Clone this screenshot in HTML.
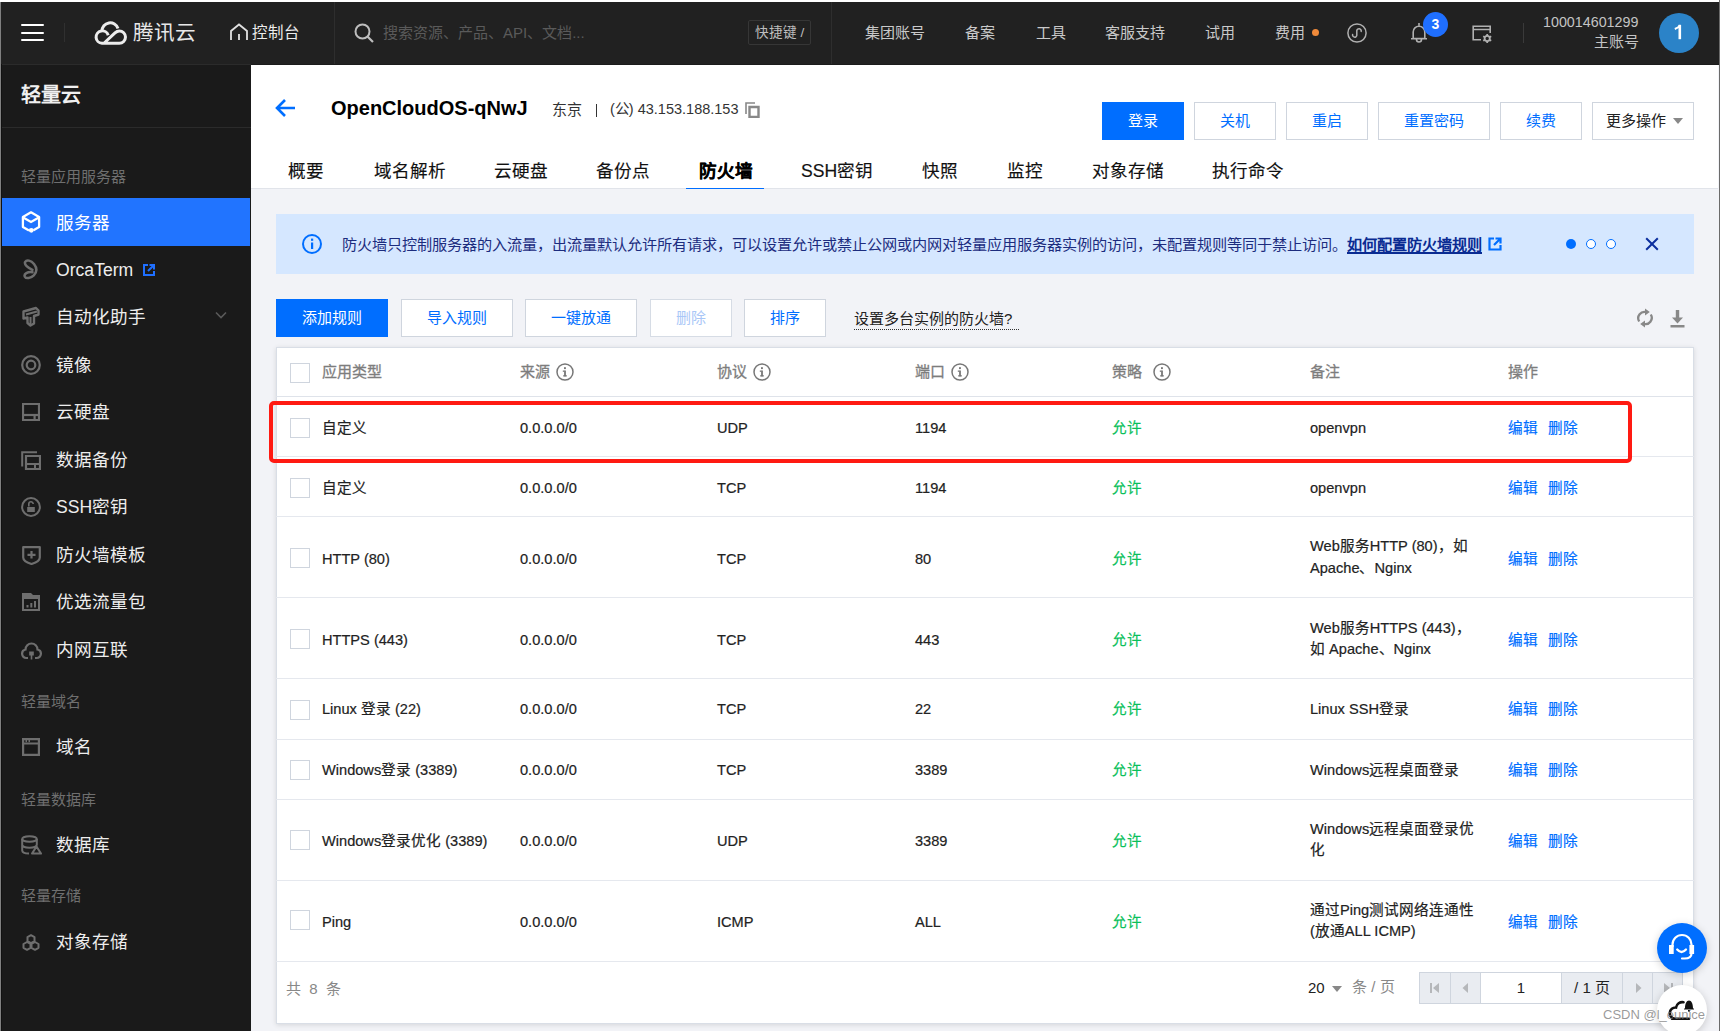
<!DOCTYPE html>
<html lang="zh-CN"><head><meta charset="utf-8">
<style>
*{box-sizing:border-box;margin:0;padding:0}
html,body{width:1720px;height:1031px;overflow:hidden;background:#fff;font-family:"Liberation Sans",sans-serif;}
.a{position:absolute;white-space:nowrap}
#edgeL{position:absolute;left:0;top:2px;width:1px;height:1029px;background:#808080}
#edgeL2{position:absolute;left:1px;top:64px;width:1px;height:967px;background:#111}
#edgeR{position:absolute;left:1719px;top:0;width:1px;height:1031px;background:#6b6b6b}
#hdr{position:absolute;left:1px;top:2px;width:1718px;height:62px;background:#212121}
#side{position:absolute;left:2px;top:64px;width:249px;height:967px;background:#1a1a1a;border-top:1px solid #2b2b2b}
#main{position:absolute;left:251px;top:65px;width:1468px;height:966px;background:#f2f3f7}
#mhead{position:absolute;left:251px;top:65px;width:1467px;height:124px;background:#fff;border-bottom:1px solid #e1e4ea}
.hn{color:#c9c9c9;font-size:15px;line-height:20px;top:23px}
.si{color:#ededed;font-size:17.6px;line-height:24px;left:56px}
.sl{color:#6f6f6f;font-size:15px;line-height:20px;left:21px}
.ic{position:absolute;left:21px}
.tab{color:#111;font-size:17.6px;line-height:24px;top:158.8px;-webkit-text-stroke:0.15px currentColor}
.cb{position:absolute;left:290px;width:20px;height:20px;border:1px solid #cfd5de;background:#fff}
.th{font-size:15px;line-height:20px;top:362px;color:#7d7d7d;-webkit-text-stroke:0.3px currentColor}
.td{font-size:14.6px;line-height:22px;color:#222;-webkit-text-stroke:0.2px currentColor}
.btn{position:absolute;height:38px;border:1px solid #cfd5de;background:#fff;color:#006eff;font-size:15px;line-height:36px;text-align:center}
</style></head><body>
<div id="hdr"></div>
<div id="side"></div>
<div id="main"></div>
<div id="mhead"></div>
<div class="a" style="left:251px;top:64px;width:1468px;height:1px;background:#1b1b1b"></div>
<div id="edgeL"></div><div id="edgeL2"></div><div id="edgeR"></div>

<!-- HEADER -->
<div class="a" style="left:21px;top:24px;width:23px;height:2px;background:#fff;border-radius:1px"></div>
<div class="a" style="left:21px;top:32px;width:23px;height:2px;background:#fff;border-radius:1px"></div>
<div class="a" style="left:21px;top:39px;width:23px;height:2px;background:#fff;border-radius:1px"></div>
<div class="a" style="left:64px;top:23px;width:1px;height:19px;background:#303030"></div>
<svg class="a" style="left:90px;top:15px" width="45" height="35" viewBox="0 0 45 35"><path d="M18.2 20.2 A6.2 6.2 0 1 0 12 28.3 H29.3 A6.2 6.2 0 0 0 29.3 15.9 C27.6 15.9 26.3 16.6 25 17.8 L14.2 28" fill="none" stroke="#ececec" stroke-width="3" stroke-linejoin="round"/><path d="M12 16.2 A8.2 8.2 0 0 1 28 13.5" fill="none" stroke="#ececec" stroke-width="3"/></svg>
<div class="a" style="left:133px;top:19px;font-size:20.6px;line-height:28px;color:#e8e8e8">腾讯云</div>
<svg class="a" style="left:229px;top:23px" width="20" height="18" viewBox="0 0 20 18"><path d="M2 17 V8 L10 1.5 L18 8 V17 M10 11 V17" fill="none" stroke="#e0e0e0" stroke-width="1.8"/></svg>
<div class="a" style="left:252px;top:22px;font-size:15.5px;line-height:21px;color:#ececec">控制台</div>
<div class="a" style="left:334px;top:2px;width:1px;height:62px;background:#2e2e2e"></div>
<svg class="a" style="left:354px;top:23px" width="21" height="20" viewBox="0 0 21 20"><circle cx="8.5" cy="8.5" r="7" fill="none" stroke="#bdbdbd" stroke-width="2"/><path d="M13.5 13.5 L19 19" stroke="#bdbdbd" stroke-width="2.2"/></svg>
<div class="a" style="left:383px;top:22px;font-size:15px;line-height:21px;color:#5a5a5a">搜索资源、产品、API、文档...</div>
<div class="a" style="left:748px;top:20px;width:63px;height:25px;border:1px solid #363636;border-radius:2px;color:#bdbdbd;font-size:13.6px;line-height:23px;text-align:center">快捷键 /</div>
<div class="a" style="left:831px;top:2px;width:1px;height:62px;background:#2e2e2e"></div>
<div class="a hn" style="left:865px">集团账号</div>
<div class="a hn" style="left:965px">备案</div>
<div class="a hn" style="left:1036px">工具</div>
<div class="a hn" style="left:1105px">客服支持</div>
<div class="a hn" style="left:1205px">试用</div>
<div class="a hn" style="left:1275px">费用</div>
<div class="a" style="left:1312px;top:29px;width:7px;height:7px;border-radius:50%;background:#f08a3a"></div>
<svg class="a" style="left:1347px;top:23px" width="20" height="20" viewBox="0 0 20 20"><circle cx="10" cy="10" r="9.1" fill="none" stroke="#b0b0b0" stroke-width="1.5"/><path d="M5.6 11.6 A2.1 2.1 0 1 0 9.8 12.4 V7.6 A2.1 2.1 0 1 1 14.2 8.4" fill="none" stroke="#b0b0b0" stroke-width="1.5" stroke-linecap="round"/></svg>
<svg class="a" style="left:1410px;top:22px" width="18" height="21" viewBox="0 0 18 21"><path d="M3.2 16.5 V10 a5.8 5.8 0 0 1 11.6 0 V16.5 Z M1 16.8 H17 M9 1 V3.5 M6.5 17.5 a2.5 2.5 0 0 0 5 0" fill="none" stroke="#b0b0b0" stroke-width="1.6" stroke-linejoin="round"/></svg>
<div class="a" style="left:1423px;top:12px;width:25px;height:25px;border-radius:50%;background:#1f6fff;color:#fff;font-size:14px;font-weight:bold;line-height:25px;text-align:center">3</div>
<svg class="a" style="left:1472px;top:25px" width="21" height="19" viewBox="0 0 21 19"><path d="M9 14.8 H1.2 V1.2 H18.2 V8 M1.2 4.5 H18.2" fill="none" stroke="#b0b0b0" stroke-width="1.6"/><g transform="translate(15.2 13.5)"><circle r="2.6" fill="none" stroke="#b0b0b0" stroke-width="1.8"/><path d="M0 -4.6 V-2.6 M0 4.6 V2.6 M-4 -2.3 L-2.25 -1.3 M4 2.3 L2.25 1.3 M-4 2.3 L-2.25 1.3 M4 -2.3 L2.25 -1.3" stroke="#b0b0b0" stroke-width="1.8"/></g></svg>
<div class="a" style="left:1523px;top:23px;width:1px;height:20px;background:#3a3a3a"></div>
<div class="a" style="left:1543px;top:13px;font-size:14.3px;line-height:18px;color:#c4c4c4">100014601299</div>
<div class="a" style="left:1594px;top:32px;font-size:15px;line-height:20px;color:#c4c4c4">主账号</div>
<div class="a" style="left:1659px;top:13px;width:40px;height:40px;border-radius:50%;background:#2b83c8"></div><svg class="a" style="left:1674px;top:24px" width="9" height="16" viewBox="0 0 9 16"><path d="M5.8 0.8 V15.2" stroke="#fff" stroke-width="2.6"/><path d="M6 1.2 C5 3 3 4.3 0.8 5" fill="none" stroke="#fff" stroke-width="2"/></svg>

<!-- SIDEBAR -->
<div class="a" style="left:21px;top:82px;font-size:20px;line-height:26px;color:#f0f0f0;font-weight:bold">轻量云</div>
<div class="a" style="left:2px;top:127px;width:249px;height:1px;background:#2b2b2b"></div>
<div class="a sl" style="top:167px">轻量应用服务器</div>
<div class="a" style="left:2px;top:198px;width:248px;height:48px;background:#2174ff"></div>
<div class="a si" style="top:211px;color:#fff">服务器</div>
<div class="a si" style="top:258px">OrcaTerm</div>
<div class="a si" style="top:305px">自动化助手</div>
<div class="a si" style="top:353px">镜像</div>
<div class="a si" style="top:400px">云硬盘</div>
<div class="a si" style="top:448px">数据备份</div>
<div class="a si" style="top:495px">SSH密钥</div>
<div class="a si" style="top:543px">防火墙模板</div>
<div class="a si" style="top:590px">优选流量包</div>
<div class="a si" style="top:638px">内网互联</div>
<div class="a sl" style="top:691.5px">轻量域名</div>
<div class="a si" style="top:735px">域名</div>
<div class="a sl" style="top:789.5px">轻量数据库</div>
<div class="a si" style="top:833px">数据库</div>
<div class="a sl" style="top:886px">轻量存储</div>
<div class="a si" style="top:930px">对象存储</div>

<svg class="ic" style="top:211px;left:21px" width="20" height="22" viewBox="0 0 20 22"><path d="M8 19.6 L1.9 16.1 V6 L10 1.3 L18.1 6 V16.1 L12.5 19.3" fill="none" stroke="#fff" stroke-width="2.3" stroke-linejoin="round"/><path d="M2.6 6.8 L10 11 L17.4 6.8" fill="none" stroke="#fff" stroke-width="2.3"/><circle cx="10.3" cy="19.3" r="2.4" fill="#fff"/></svg>
<svg class="ic" style="top:259px;left:22px" width="18" height="22" viewBox="0 0 18 22"><path d="M10.5 10.8 C6 9 1.8 5.5 3.2 2.8 C4.6 0.6 9 1.2 12 5 C15.2 9 15.2 12.8 11.8 16.3 C8.8 19.2 4.2 20.2 2.8 17.6 C1.6 15 5.5 12.5 10.5 13.2" fill="none" stroke="#6e6e6e" stroke-width="2.5" stroke-linecap="round"/></svg>
<svg class="ic" style="top:306px;left:22px" width="18" height="21" viewBox="0 0 18 21"><path d="M1.5 5.5 L14 2 L16.5 4.5 V8.5 L12 10 V17.5 L8.5 19.5 L5.5 17 V11.5 L1.5 12.5 Z" fill="none" stroke="#6e6e6e" stroke-width="2.4" stroke-linejoin="round"/><path d="M4 8.5 L15 5.5 M8.5 11 V18" stroke="#6e6e6e" stroke-width="2"/></svg>
<svg class="ic" style="top:355px" width="20" height="20" viewBox="0 0 20 20"><circle cx="10" cy="10" r="8.8" fill="none" stroke="#6e6e6e" stroke-width="2.2"/><circle cx="10" cy="10" r="4.3" fill="none" stroke="#6e6e6e" stroke-width="2.2"/></svg>
<svg class="ic" style="top:403px;left:22px" width="18" height="18" viewBox="0 0 18 18"><path d="M1 1 H17 V17 H1 Z" fill="none" stroke="#6e6e6e" stroke-width="2.2"/><path d="M1 12 H17" stroke="#6e6e6e" stroke-width="2.2"/><rect x="11.5" y="12" width="2.2" height="4" fill="#6e6e6e"/></svg>
<svg class="ic" style="top:451px" width="20" height="19" viewBox="0 0 20 19"><path d="M1.2 15.5 V1.2 H16" fill="none" stroke="#6e6e6e" stroke-width="2"/><path d="M5 5 H19 V18 H5 Z M5 13 H19" fill="none" stroke="#6e6e6e" stroke-width="2.2"/><rect x="13" y="13" width="2" height="4" fill="#6e6e6e"/></svg>
<svg class="ic" style="top:497px" width="20" height="20" viewBox="0 0 20 20"><circle cx="10" cy="10" r="8.9" fill="none" stroke="#6e6e6e" stroke-width="2"/><path d="M7.8 9.5 V7 a2.2 2.2 0 0 1 4.4 0" fill="none" stroke="#6e6e6e" stroke-width="1.6"/><rect x="6.2" y="10" width="7.6" height="5" fill="#6e6e6e"/></svg>
<svg class="ic" style="top:546px;left:22px" width="19" height="19" viewBox="0 0 19 19"><path d="M1.2 1.2 H17.8 V11.5 C17.8 14.5 13 17 9.5 18 C6 17 1.2 14.5 1.2 11.5 Z" fill="none" stroke="#6e6e6e" stroke-width="2.2" stroke-linejoin="round"/><path d="M9.5 5 V12.5 M5.5 8.8 H13.5" stroke="#6e6e6e" stroke-width="2.2"/></svg>
<svg class="ic" style="top:593px;left:22px" width="19" height="18" viewBox="0 0 19 18"><path d="M0 0 H9 L11 2 H18 V18 H0 Z" fill="#6e6e6e"/><path d="M2 6 H16 V16 H2 Z" fill="#1a1a1a"/><rect x="4.5" y="12" width="2" height="2.5" fill="#6e6e6e"/><rect x="8.3" y="10" width="2" height="4.5" fill="#6e6e6e"/><rect x="12" y="8" width="2" height="6.5" fill="#6e6e6e"/></svg>
<svg class="ic" style="top:640px" width="21" height="20" viewBox="0 0 21 20"><path d="M7 18 H5.5 a4.3 4.3 0 0 1 -1 -8.5 a6 6 0 0 1 12 0 a4.3 4.3 0 0 1 -1 8.5 H14" fill="none" stroke="#6e6e6e" stroke-width="2.2"/><path d="M8.2 11.5 H12.8 V15.5 H11.3 V19.5 H9.7 V15.5 H8.2 Z" fill="#6e6e6e"/></svg>
<svg class="ic" style="top:738px;left:22px" width="18" height="18" viewBox="0 0 18 18"><path d="M1.1 1.1 H16.9 V16.9 H1.1 Z" fill="none" stroke="#6e6e6e" stroke-width="2.2"/><path d="M1 5.5 H17" stroke="#6e6e6e" stroke-width="2"/><rect x="3.5" y="2" width="1.5" height="2.2" fill="#6e6e6e"/><rect x="6.5" y="2" width="1.5" height="2.2" fill="#6e6e6e"/></svg>
<svg class="ic" style="top:835px" width="21" height="20" viewBox="0 0 21 20"><ellipse cx="8.5" cy="4" rx="7.3" ry="2.8" fill="none" stroke="#6e6e6e" stroke-width="2"/><path d="M1.2 4 V15.5 C1.2 17.2 4 18.5 8 18.6 M1.2 9.8 C1.2 11.5 4.5 12.7 8.5 12.7 C12.5 12.7 15.8 11.5 15.8 9.8 V4" fill="none" stroke="#6e6e6e" stroke-width="2"/><path d="M15.5 11.5 L20 18.6 H11 Z" fill="none" stroke="#6e6e6e" stroke-width="2" stroke-linejoin="round"/></svg>
<svg class="ic" style="top:934px;left:22px" width="18" height="17" viewBox="0 0 18 17"><path d="M9 1.2 L12.5 3.2 V7 L9 9 L5.5 7 V3.2 Z M5 8 L8.5 10 V13.8 L5 15.8 L1.5 13.8 V10 Z M13 8 L16.5 10 V13.8 L13 15.8 L9.5 13.8 V10 Z" fill="none" stroke="#6e6e6e" stroke-width="2" stroke-linejoin="round"/></svg>
<svg class="a" style="left:143px;top:264px" width="12" height="12" viewBox="0 0 12 12"><path d="M5 1 H1 V11 H11 V7" fill="none" stroke="#1f6fff" stroke-width="2"/><path d="M6.5 1 H11 V5.5 M10.8 1.2 L5 7" fill="none" stroke="#1f6fff" stroke-width="2"/></svg>
<svg class="a" style="left:215px;top:311px" width="12" height="8" viewBox="0 0 12 8"><path d="M1 1.5 L6 6.5 L11 1.5" fill="none" stroke="#5a5a5a" stroke-width="1.6"/></svg>


<!-- CONTENT HEADER -->

<svg class="a" style="left:275px;top:98px" width="21" height="20" viewBox="0 0 21 20"><path d="M10 2 L2 10 L10 18 M2.5 10 H20" fill="none" stroke="#006eff" stroke-width="2.6"/></svg>
<div class="a" style="left:331px;top:95px;font-size:20px;line-height:26px;font-weight:bold;color:#000">OpenCloudOS-qNwJ</div>
<div class="a" style="left:552px;top:100px;font-size:15px;line-height:20px;color:#333">东京</div>
<div class="a" style="left:596px;top:104px;width:1.3px;height:13px;background:#333"></div>
<div class="a" style="left:610px;top:99px;font-size:14.5px;line-height:20px;color:#333">(公) 43.153.188.153</div>
<svg class="a" style="left:745px;top:102px" width="15" height="16" viewBox="0 0 15 16"><path d="M1 12 V1 H10" fill="none" stroke="#888" stroke-width="1.6"/><path d="M4.5 5 H13.5 V15 H4.5 Z" fill="none" stroke="#888" stroke-width="2.4"/></svg>

<div class="btn" style="left:1102px;top:102px;width:82px;background:#006eff;border-color:#006eff;color:#fff">登录</div>
<div class="btn" style="left:1194px;top:102px;width:82px">关机</div>
<div class="btn" style="left:1286px;top:102px;width:82px">重启</div>
<div class="btn" style="left:1378px;top:102px;width:112px">重置密码</div>
<div class="btn" style="left:1500px;top:102px;width:82px">续费</div>
<div class="btn" style="left:1592px;top:102px;width:102px;color:#222;text-align:left;padding-left:13px">更多操作</div>
<svg class="a" style="left:1673px;top:118px" width="10" height="6" viewBox="0 0 10 6"><path d="M0 0 H10 L5 6 Z" fill="#888"/></svg>

<div class="a tab" style="left:288px">概要</div>
<div class="a tab" style="left:374px">域名解析</div>
<div class="a tab" style="left:494px">云硬盘</div>
<div class="a tab" style="left:596px">备份点</div>
<div class="a tab" style="left:699px;font-weight:bold;color:#000">防火墙</div>
<div class="a tab" style="left:801px">SSH密钥</div>
<div class="a tab" style="left:922px">快照</div>
<div class="a tab" style="left:1007px">监控</div>
<div class="a tab" style="left:1092px">对象存储</div>
<div class="a tab" style="left:1212px">执行命令</div>
<div class="a" style="left:686px;top:187.7px;width:78px;height:1.6px;background:#006eff"></div>

<!-- BANNER -->
<div class="a" style="left:276px;top:214px;width:1418px;height:60px;background:#d5e7ff"></div>
<svg class="a" style="left:302px;top:234px" width="20" height="20" viewBox="0 0 20 20"><circle cx="10" cy="10" r="9" fill="none" stroke="#006eff" stroke-width="2"/><rect x="9" y="8.5" width="2.2" height="6.5" fill="#006eff"/><rect x="9" y="4.6" width="2.2" height="2.2" fill="#006eff"/></svg>
<div class="a" lang="zh-CN" style="left:342px;top:235px;font-size:15.2px;line-height:20px;color:#1c2c7e">防火墙只控制服务器的入流量，出流量默认允许所有请求，可以设置允许或禁止公网或内网对轻量应用服务器实例的访问，未配置规则等同于禁止访问。<span style="font-weight:bold;color:#0a2b92">如何配置防火墙规则</span></div>
<svg class="a" style="left:1488px;top:237px" width="14" height="14" viewBox="0 0 14 14"><path d="M6 1.5 H1.5 V12.5 H12.5 V8" fill="none" stroke="#006eff" stroke-width="2.2"/><path d="M7.5 1.5 H12.5 V6.5 M12 2 L6 8" fill="none" stroke="#006eff" stroke-width="2.2"/></svg>
<div class="a" style="left:1566px;top:239px;width:10px;height:10px;border-radius:50%;background:#006eff"></div>
<div class="a" style="left:1586px;top:239px;width:10px;height:10px;border-radius:50%;border:1.5px solid #006eff;background:#fff"></div>
<div class="a" style="left:1606px;top:239px;width:10px;height:10px;border-radius:50%;border:1.5px solid #006eff;background:#fff"></div>
<svg class="a" style="left:1645px;top:237px" width="14" height="14" viewBox="0 0 14 14"><path d="M1.2 1.2 L12.8 12.8 M12.8 1.2 L1.2 12.8" stroke="#0b2e9e" stroke-width="2"/></svg>

<div class="a" style="left:1347px;top:252px;width:135px;height:2px;background:#0a2b92"></div>
<!-- TOOLBAR -->
<div class="btn" style="left:276px;top:299px;width:112px;background:#006eff;border-color:#006eff;color:#fff">添加规则</div>
<div class="btn" style="left:401px;top:299px;width:112px">导入规则</div>
<div class="btn" style="left:525px;top:299px;width:112px">一键放通</div>
<div class="btn" style="left:650px;top:299px;width:82px;color:#a9c7f7;border-color:#d6dce5">删除</div>
<div class="btn" style="left:744px;top:299px;width:82px">排序</div>
<div class="a" style="left:854px;top:309px;font-size:15px;line-height:20px;color:#222;border-bottom:1px dotted #333;padding-right:7px">设置多台实例的防火墙?</div>
<svg class="a" style="left:1636px;top:307px" width="18" height="22" viewBox="0 0 18 22"><path d="M3.2 14.5 A6.3 6.3 0 0 1 10.5 5.2 M14.8 7.5 A6.3 6.3 0 0 1 7.5 16.8" fill="none" stroke="#888" stroke-width="2.3"/><path d="M9 1.5 L13.8 5 L9 8.5 Z M9 13.5 L4.2 17 L9 20.5 Z" fill="#888"/></svg>
<svg class="a" style="left:1670px;top:310px" width="15" height="18" viewBox="0 0 15 18"><rect x="5.8" y="0" width="3.4" height="8" fill="#888"/><path d="M2 7.5 H13 L7.5 13.5 Z" fill="#888"/><rect x="0.5" y="15" width="14" height="2.5" fill="#888"/></svg>
<div class="a" style="left:276px;top:347px;width:1418px;height:677px;background:#fff;border:1px solid #d9dee6;box-shadow:0 1px 5px rgba(0,0,0,0.12)"></div>
<div class="cb" style="top:363px"></div>
<div class="a th" style="left:322px">应用类型</div>
<div class="a th" style="left:520px">来源</div>
<svg class="a" style="left:556px;top:363px" width="18" height="18" viewBox="0 0 18 18"><circle cx="9" cy="9" r="8" fill="none" stroke="#777" stroke-width="1.5"/><rect x="8.1" y="7.5" width="1.8" height="5.8" fill="#777"/><rect x="6.8" y="7.5" width="1.6" height="1.3" fill="#777"/><rect x="7.2" y="12.2" width="3.6" height="1.3" fill="#777"/><rect x="8" y="4.2" width="1.9" height="1.9" fill="#777"/></svg>
<div class="a th" style="left:717px">协议</div>
<svg class="a" style="left:753px;top:363px" width="18" height="18" viewBox="0 0 18 18"><circle cx="9" cy="9" r="8" fill="none" stroke="#777" stroke-width="1.5"/><rect x="8.1" y="7.5" width="1.8" height="5.8" fill="#777"/><rect x="6.8" y="7.5" width="1.6" height="1.3" fill="#777"/><rect x="7.2" y="12.2" width="3.6" height="1.3" fill="#777"/><rect x="8" y="4.2" width="1.9" height="1.9" fill="#777"/></svg>
<div class="a th" style="left:915px">端口</div>
<svg class="a" style="left:951px;top:363px" width="18" height="18" viewBox="0 0 18 18"><circle cx="9" cy="9" r="8" fill="none" stroke="#777" stroke-width="1.5"/><rect x="8.1" y="7.5" width="1.8" height="5.8" fill="#777"/><rect x="6.8" y="7.5" width="1.6" height="1.3" fill="#777"/><rect x="7.2" y="12.2" width="3.6" height="1.3" fill="#777"/><rect x="8" y="4.2" width="1.9" height="1.9" fill="#777"/></svg>
<div class="a th" style="left:1112px">策略</div>
<svg class="a" style="left:1153px;top:363px" width="18" height="18" viewBox="0 0 18 18"><circle cx="9" cy="9" r="8" fill="none" stroke="#777" stroke-width="1.5"/><rect x="8.1" y="7.5" width="1.8" height="5.8" fill="#777"/><rect x="6.8" y="7.5" width="1.6" height="1.3" fill="#777"/><rect x="7.2" y="12.2" width="3.6" height="1.3" fill="#777"/><rect x="8" y="4.2" width="1.9" height="1.9" fill="#777"/></svg>
<div class="a th" style="left:1310px">备注</div>
<div class="a th" style="left:1508px">操作</div>
<div class="a" style="left:276px;top:396px;width:1418px;height:1px;background:#dfe3ea"></div>
<div class="cb" style="top:418px"></div>
<div class="a td" style="left:322px;top:417px">自定义</div>
<div class="a td" style="left:520px;top:417px">0.0.0.0/0</div>
<div class="a td" style="left:717px;top:417px">UDP</div>
<div class="a td" style="left:915px;top:417px">1194</div>
<div class="a td" style="left:1112px;top:417px;color:#0abf5b">允许</div>
<div class="a td" style="left:1310px;top:417px">openvpn</div>
<div class="a td" style="left:1508px;top:417px;color:#006eff">编辑</div>
<div class="a td" style="left:1548px;top:417px;color:#006eff">删除</div>
<div class="a" style="left:276px;top:456px;width:1418px;height:1px;background:#e5e8ee"></div>
<div class="cb" style="top:478px"></div>
<div class="a td" style="left:322px;top:477.2px">自定义</div>
<div class="a td" style="left:520px;top:477.2px">0.0.0.0/0</div>
<div class="a td" style="left:717px;top:477.2px">TCP</div>
<div class="a td" style="left:915px;top:477.2px">1194</div>
<div class="a td" style="left:1112px;top:477.2px;color:#0abf5b">允许</div>
<div class="a td" style="left:1310px;top:477.2px">openvpn</div>
<div class="a td" style="left:1508px;top:477.2px;color:#006eff">编辑</div>
<div class="a td" style="left:1548px;top:477.2px;color:#006eff">删除</div>
<div class="a" style="left:276px;top:516px;width:1418px;height:1px;background:#e5e8ee"></div>
<div class="cb" style="top:548px"></div>
<div class="a td" style="left:322px;top:547.8px">HTTP (80)</div>
<div class="a td" style="left:520px;top:547.8px">0.0.0.0/0</div>
<div class="a td" style="left:717px;top:547.8px">TCP</div>
<div class="a td" style="left:915px;top:547.8px">80</div>
<div class="a td" style="left:1112px;top:547.8px;color:#0abf5b">允许</div>
<div class="a td" style="left:1310px;top:536.3px;line-height:21.5px">Web服务HTTP (80)<span lang="zh-CN">，</span>如<br>Apache、Nginx</div>
<div class="a td" style="left:1508px;top:547.8px;color:#006eff">编辑</div>
<div class="a td" style="left:1548px;top:547.8px;color:#006eff">删除</div>
<div class="a" style="left:276px;top:597px;width:1418px;height:1px;background:#e5e8ee"></div>
<div class="cb" style="top:629px"></div>
<div class="a td" style="left:322px;top:629.3px">HTTPS (443)</div>
<div class="a td" style="left:520px;top:629.3px">0.0.0.0/0</div>
<div class="a td" style="left:717px;top:629.3px">TCP</div>
<div class="a td" style="left:915px;top:629.3px">443</div>
<div class="a td" style="left:1112px;top:629.3px;color:#0abf5b">允许</div>
<div class="a td" style="left:1310px;top:617.8px;line-height:21.5px">Web服务HTTPS (443)<span lang="zh-CN">，</span><br>如 Apache、Nginx</div>
<div class="a td" style="left:1508px;top:629.3px;color:#006eff">编辑</div>
<div class="a td" style="left:1548px;top:629.3px;color:#006eff">删除</div>
<div class="a" style="left:276px;top:678px;width:1418px;height:1px;background:#e5e8ee"></div>
<div class="cb" style="top:700px"></div>
<div class="a td" style="left:322px;top:698.3px">Linux 登录 (22)</div>
<div class="a td" style="left:520px;top:698.3px">0.0.0.0/0</div>
<div class="a td" style="left:717px;top:698.3px">TCP</div>
<div class="a td" style="left:915px;top:698.3px">22</div>
<div class="a td" style="left:1112px;top:698.3px;color:#0abf5b">允许</div>
<div class="a td" style="left:1310px;top:698.3px">Linux SSH登录</div>
<div class="a td" style="left:1508px;top:698.3px;color:#006eff">编辑</div>
<div class="a td" style="left:1548px;top:698.3px;color:#006eff">删除</div>
<div class="a" style="left:276px;top:739px;width:1418px;height:1px;background:#e5e8ee"></div>
<div class="cb" style="top:760px"></div>
<div class="a td" style="left:322px;top:758.5px">Windows登录 (3389)</div>
<div class="a td" style="left:520px;top:758.5px">0.0.0.0/0</div>
<div class="a td" style="left:717px;top:758.5px">TCP</div>
<div class="a td" style="left:915px;top:758.5px">3389</div>
<div class="a td" style="left:1112px;top:758.5px;color:#0abf5b">允许</div>
<div class="a td" style="left:1310px;top:758.5px">Windows远程桌面登录</div>
<div class="a td" style="left:1508px;top:758.5px;color:#006eff">编辑</div>
<div class="a td" style="left:1548px;top:758.5px;color:#006eff">删除</div>
<div class="a" style="left:276px;top:799px;width:1418px;height:1px;background:#e5e8ee"></div>
<div class="cb" style="top:830px"></div>
<div class="a td" style="left:322px;top:830px">Windows登录优化 (3389)</div>
<div class="a td" style="left:520px;top:830px">0.0.0.0/0</div>
<div class="a td" style="left:717px;top:830px">UDP</div>
<div class="a td" style="left:915px;top:830px">3389</div>
<div class="a td" style="left:1112px;top:830px;color:#0abf5b">允许</div>
<div class="a td" style="left:1310px;top:818.5px;line-height:21.5px">Windows远程桌面登录优<br>化</div>
<div class="a td" style="left:1508px;top:830px;color:#006eff">编辑</div>
<div class="a td" style="left:1548px;top:830px;color:#006eff">删除</div>
<div class="a" style="left:276px;top:880px;width:1418px;height:1px;background:#e5e8ee"></div>
<div class="cb" style="top:910px"></div>
<div class="a td" style="left:322px;top:911.2px">Ping</div>
<div class="a td" style="left:520px;top:911.2px">0.0.0.0/0</div>
<div class="a td" style="left:717px;top:911.2px">ICMP</div>
<div class="a td" style="left:915px;top:911.2px">ALL</div>
<div class="a td" style="left:1112px;top:911.2px;color:#0abf5b">允许</div>
<div class="a td" style="left:1310px;top:899.7px;line-height:21.5px">通过Ping测试网络连通性<br>(放通ALL ICMP)</div>
<div class="a td" style="left:1508px;top:911.2px;color:#006eff">编辑</div>
<div class="a td" style="left:1548px;top:911.2px;color:#006eff">删除</div>
<div class="a" style="left:276px;top:961px;width:1418px;height:1px;background:#e5e8ee"></div>
<div class="a" style="left:286px;top:979px;font-size:15px;line-height:20px;color:#888;letter-spacing:2px">共 8 条</div>
<div class="a" style="left:1308px;top:978px;font-size:15px;line-height:20px;color:#222">20</div>
<svg class="a" style="left:1332px;top:986px" width="10" height="6" viewBox="0 0 10 6"><path d="M0 0 H10 L5 6 Z" fill="#888"/></svg>
<div class="a" style="left:1352px;top:977px;font-size:15px;line-height:20px;color:#888">条 / 页</div>
<div class="a" style="left:1419px;top:972px;width:264px;height:32px;border:1px solid #cfd5de;background:#e9ecf1"></div>
<div class="a" style="left:1450px;top:972px;width:1px;height:32px;background:#cfd5de"></div>
<div class="a" style="left:1480px;top:972px;width:1px;height:32px;background:#cfd5de"></div>
<div class="a" style="left:1561px;top:972px;width:1px;height:32px;background:#cfd5de"></div>
<div class="a" style="left:1622px;top:972px;width:1px;height:32px;background:#cfd5de"></div>
<div class="a" style="left:1652px;top:972px;width:1px;height:32px;background:#cfd5de"></div>
<div class="a" style="left:1481px;top:973px;width:80px;height:30px;background:#fff;text-align:center;font-size:15px;line-height:30px;color:#222">1</div>
<div class="a" style="left:1562px;top:973px;width:60px;height:30px;text-align:center;font-size:15px;line-height:30px;color:#222">/ 1 页</div>
<svg class="a" style="left:1429px;top:982px" width="12" height="12" viewBox="0 0 12 12"><rect x="1" y="1" width="2" height="10" fill="#b5b7ba"/><path d="M10 1 V11 L4 6 Z" fill="#b5b7ba"/></svg>
<svg class="a" style="left:1460px;top:982px" width="12" height="12" viewBox="0 0 12 12"><path d="M8 1 V11 L2.5 6 Z" fill="#b5b7ba"/></svg>
<svg class="a" style="left:1632px;top:982px" width="12" height="12" viewBox="0 0 12 12"><path d="M4 1 V11 L9.5 6 Z" fill="#b5b7ba"/></svg>
<svg class="a" style="left:1662px;top:982px" width="12" height="12" viewBox="0 0 12 12"><path d="M2 1 V11 L8 6 Z" fill="#b5b7ba"/><rect x="9" y="1" width="2" height="10" fill="#b5b7ba"/></svg>
<div class="a" style="left:269px;top:401px;width:1363px;height:62px;border:4px solid #ff1a12;border-radius:5px"></div>
<div class="a" style="left:1657px;top:923px;width:50px;height:50px;border-radius:50%;background:#006eff;box-shadow:0 2px 8px rgba(0,0,0,0.18)"></div>
<svg class="a" style="left:1657px;top:923px" width="50" height="50" viewBox="0 0 50 50"><path d="M15.5 24 V21.5 A9.5 9.5 0 0 1 34.5 21.5 V24" fill="none" stroke="#fff" stroke-width="2.2"/><rect x="12" y="22" width="4.7" height="9" fill="#fff"/><rect x="32.4" y="22" width="4.7" height="9" fill="#fff"/><path d="M20.2 26.5 Q24.5 31.5 29 26.5" fill="none" stroke="#fff" stroke-width="2.3" stroke-linecap="round"/><path d="M34.5 30.5 Q34.5 35.5 27.5 35.5 H25" fill="none" stroke="#fff" stroke-width="2.2" stroke-linecap="round"/></svg>
<div class="a" style="left:1657px;top:985px;width:50px;height:50px;border-radius:50%;background:#fff;box-shadow:0 2px 8px rgba(0,0,0,0.18)"></div>
<svg class="a" style="left:1668px;top:999px" width="28" height="23" viewBox="0 0 28 23"><path d="M15.5 3.2 A6.5 6.5 0 0 0 8 8.5 A5 5 0 0 0 7 19.8 H18 M4 19.8 H21" fill="none" stroke="#111" stroke-width="2.6" stroke-linecap="round"/><path d="M17 9.5 C17 4.5 18.5 1.5 21 1.5 C23.5 1.5 25 4.5 25 9.5 L26 9.5 V10.5 H16 V9.5 Z" fill="#111"/><rect x="20" y="11" width="2" height="1.6" fill="#111"/></svg>
<div class="a" style="left:1603px;top:1006px;font-size:13px;line-height:18px;color:rgba(120,120,120,0.75)">CSDN @l_eunice</div>

</body></html>
